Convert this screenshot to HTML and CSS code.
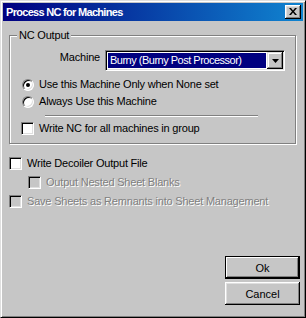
FILE: index.html
```html
<!DOCTYPE html>
<html lang="en">
<head>
    <meta charset="UTF-8">
    <title>Process NC for Machines</title>
    <link rel="stylesheet" href="styles.css">
</head>
<body>

    <div class="window">
        <div class="titlebar">
            <span class="title">Process NC for Machines</span>
            <button class="close-btn" type="button">
                <svg width="8" height="7" viewBox="0 0 8 7">
                    <path d="M0 0h2l2 2.4L6 0h2L5 3.5 8 7H6L4 4.6 2 7H0l3-3.5z" fill="#000"/>
                </svg>
            </button>
        </div>

        <div class="dialog-body">
            <div class="group">
                <span class="group-title">NC Output</span>

                <div class="machine-row">
                    <label class="machine-label">Machine</label>
                    <div class="combo">
                        <span class="combo-value">Burny (Burny Post Processor)</span>
                        <span class="combo-btn">
                            <svg width="7" height="4" viewBox="0 0 7 4"><path d="M0 0h7L3.5 4z" fill="#000"/></svg>
                        </span>
                    </div>
                </div>

                <div class="option"><span class="radio checked"></span>Use this Machine Only when None set</div>
                <div class="option"><span class="radio"></span>Always Use this Machine</div>
                <div class="separator"></div>
                <div class="option option-check"><span class="check"></span>Write NC for all machines in group</div>
            </div>

            <div class="option option-outer first"><span class="check"></span>Write Decoiler Output File</div>
            <div class="option option-outer indent disabled"><span class="check"></span>Output Nested Sheet Blanks</div>
            <div class="option option-outer disabled"><span class="check"></span>Save Sheets as Remnants into Sheet Management</div>

            <div class="buttons">
                <button class="btn btn-default" type="button">Ok</button>
                <button class="btn" type="button">Cancel</button>
            </div>
        </div>
    </div>

</body>
</html>
```

FILE: styles.css
```css
* {
    box-sizing: border-box;
}

body {
    margin: 0;
    font-family: "Liberation Sans", Arial, sans-serif;
    font-size: 11px;
    letter-spacing: -0.2px;
    color: #000;
}

.window {
    width: 306px;
    height: 318px;
    background-color: #c6c6c6;
    border: 1px solid;
    border-color: #dfdfdf #000 #000 #dfdfdf;
    box-shadow: inset 1px 1px #fff, inset -1px -1px #808080;
    padding: 2px;
    display: flex;
    flex-direction: column;
}

.titlebar {
    height: 18px;
    display: flex;
    align-items: center;
    padding: 0 2px 0 3px;
    background: linear-gradient(to right, #000080, #1084d0);
    color: #fff;
    font-weight: bold;
    font-size: 11px;
    letter-spacing: -0.7px;
}

.close-btn {
    margin-left: auto;
    width: 16px;
    height: 14px;
    padding: 0 0 1px 0;
    border: none;
    background-color: #c6c6c6;
    box-shadow: inset -1px -1px #000, inset 1px 1px #fff, inset -2px -2px #808080, inset 2px 2px #dfdfdf;
    display: flex;
    align-items: center;
    justify-content: center;
}

.dialog-body {
    flex: 1;
    display: flex;
    flex-direction: column;
    padding: 0 3px 10px 6px;
}

.group {
    position: relative;
    margin-top: 14px;
    width: 287px;
    border: 1px solid #808080;
    box-shadow: inset 1px 1px #fff, 1px 1px #fff;
    padding: 14px 0 6px 11px;
}

.group-title {
    position: absolute;
    top: -7px;
    left: 7px;
    padding: 0 2px;
    line-height: 13px;
    background-color: #c6c6c6;
}

.machine-row {
    display: flex;
    align-items: flex-start;
    margin-bottom: 5px;
}

.machine-label {
    width: 79px;
    margin: 1px 5px 0 0;
    line-height: 13px;
    text-align: right;
}

.combo {
    width: 180px;
    height: 21px;
    display: flex;
    border: 1px solid;
    border-color: #808080 #fff #fff #808080;
    box-shadow: inset 1px 1px #000, inset -1px -1px #dfdfdf;
    background-color: #fff;
    padding: 1px;
}

.combo-value {
    flex: 1;
    margin: 1px;
    padding-left: 2px;
    background-color: #000080;
    color: #fff;
    line-height: 15px;
    letter-spacing: -0.5px;
    white-space: nowrap;
    overflow: hidden;
}

.combo-btn {
    width: 16px;
    background-color: #c6c6c6;
    box-shadow: inset -1px -1px #000, inset 1px 1px #dfdfdf, inset -2px -2px #808080, inset 2px 2px #fff;
    display: flex;
    align-items: center;
    justify-content: center;
}

.option {
    display: flex;
    align-items: center;
    height: 17px;
    line-height: 13px;
    white-space: nowrap;
}

.option-check {
    margin-top: 3px;
}

.option-outer {
    height: 19px;
}

.option-outer.first {
    margin-top: 10px;
}

.option-outer.indent {
    margin-left: 19px;
}

.radio {
    position: relative;
    width: 12px;
    height: 12px;
    margin: 0 5px 0 1px;
    border-radius: 50%;
    border: 1px solid;
    border-color: #808080 #fff #fff #808080;
    box-shadow: inset 1px 1px #000, inset -1px -1px #dfdfdf;
    background-color: #fff;
}

.radio.checked::after {
    content: "";
    position: absolute;
    left: 3px;
    top: 3px;
    width: 4px;
    height: 4px;
    border-radius: 50%;
    background-color: #000;
}

.check {
    width: 13px;
    height: 13px;
    margin-right: 5px;
    border: 1px solid;
    border-color: #808080 #fff #fff #808080;
    box-shadow: inset 1px 1px #000, inset -1px -1px #dfdfdf;
    background-color: #fff;
}

.disabled {
    color: #808080;
    text-shadow: 1px 1px #fff;
}

.disabled .check {
    background-color: #c6c6c6;
}

.separator {
    margin: 5px 0 0 24px;
    width: 213px;
    height: 2px;
    border-top: 1px solid #808080;
    border-bottom: 1px solid #fff;
}

.buttons {
    margin-top: auto;
    display: flex;
    flex-direction: column;
    align-items: flex-end;
    gap: 3px;
}

.btn {
    width: 75px;
    height: 23px;
    padding: 0;
    border: none;
    background-color: #c6c6c6;
    font-family: "Liberation Sans", Arial, sans-serif;
    font-size: 11px;
    color: #000;
    box-shadow: inset -1px -1px #000, inset 1px 1px #fff, inset -2px -2px #808080, inset 2px 2px #dfdfdf;
}

.btn-default {
    border: 1px solid #000;
    box-shadow: inset -1px -1px #000, inset 1px 1px #fff, inset -2px -2px #808080;
}
```
